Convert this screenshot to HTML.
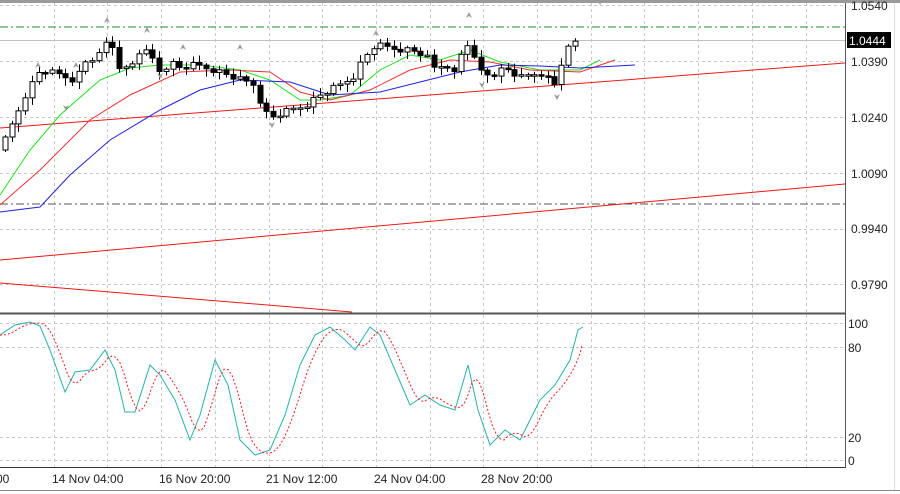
<!DOCTYPE html>
<html><head><meta charset="utf-8"><style>
body{margin:0;width:900px;height:494px;background:#fff;overflow:hidden;font-family:"Liberation Sans",sans-serif;}
svg{display:block}
text{font-family:"Liberation Sans",sans-serif;font-size:12px;fill:#222}
</style></head><body>
<svg id="s" width="900" height="494" xmlns="http://www.w3.org/2000/svg">
<rect x="0" y="0" width="900" height="494" fill="#fff"/>
<rect x="0" y="0" width="900" height="3" fill="#9a9a9a"/>
<g id="grid" stroke="#c8c8c8" stroke-dasharray="3,3" stroke-width="1"></g>
<line x1="0" y1="27" x2="845" y2="27" stroke="#2a8a2a" stroke-dasharray="8,3,2,3"/>
<line x1="0" y1="204" x2="845" y2="204" stroke="#555" stroke-dasharray="8,3,2,3"/>
<line x1="0" y1="40.5" x2="845" y2="40.5" stroke="#c0c0c0"/>
<line x1="0" y1="128" x2="845" y2="63" stroke="#f01818"/>
<line x1="0" y1="260" x2="845" y2="184" stroke="#f01818"/>
<line x1="0" y1="283" x2="352" y2="312" stroke="#f01818"/>
<g id="ma" fill="none" stroke-width="1"></g>
<g id="cdl"></g>
<g id="osc" fill="none"></g>
<line x1="845.5" y1="3" x2="845.5" y2="468" stroke="#555"/>
<line x1="0" y1="313.5" x2="845" y2="313.5" stroke="#555" stroke-width="2"/>
<line x1="0" y1="467.5" x2="845" y2="467.5" stroke="#333"/>
<line x1="0" y1="490.5" x2="900" y2="490.5" stroke="#888"/>
<line x1="894.5" y1="3" x2="894.5" y2="490" stroke="#ddd"/>
<text x="851" y="10">1.0540</text>
<text x="851" y="66">1.0390</text>
<text x="851" y="122">1.0240</text>
<text x="851" y="178">1.0090</text>
<text x="851" y="233">0.9940</text>
<text x="851" y="289">0.9790</text>
<rect x="847" y="32" width="44" height="16" fill="#000"/>
<text x="849" y="45" style="fill:#fff">1.0444</text>
<text x="848" y="328">100</text>
<text x="848" y="352">80</text>
<text x="848" y="442">20</text>
<text x="848" y="465">0</text>
<text x="-4" y="483">00</text>
<text x="52" y="483">14 Nov 04:00</text>
<text x="159" y="483">16 Nov 20:00</text>
<text x="266" y="483">21 Nov 12:00</text>
<text x="374" y="483">24 Nov 04:00</text>
<text x="481" y="483">28 Nov 20:00</text>
</svg>
<script>
(function(){
var NS="http://www.w3.org/2000/svg";
function el(p,t,a){var e=document.createElementNS(NS,t);for(var k in a)e.setAttribute(k,a[k]);document.getElementById(p).appendChild(e);return e;}
for(var i=1;i<16;i++){var x=Math.round(53.7*i)+.5;el('grid','line',{x1:x,y1:3,x2:x,y2:467});}
[5,61,117,173,229,284].forEach(function(y){el('grid','line',{x1:0,y1:y+.5,x2:845,y2:y+.5});});
[323,347,437,460].forEach(function(y){el('grid','line',{x1:0,y1:y+.5,x2:845,y2:y+.5});});
function interp(w,x){for(var i=0;i<w.length-1;i++){if(x>=w[i][0]&&x<=w[i+1][0]){var t=(x-w[i][0])/(w[i+1][0]-w[i][0]);return w[i][1]+t*(w[i+1][1]-w[i][1]);}}return w[w.length-1][1];}
function pl(g,w,c,d){var s=w.map(function(p){return p[0]+','+p[1]}).join(' ');var a={points:s,stroke:c};if(d)a['stroke-dasharray']=d;el(g,'polyline',a);}
pl('ma',[[0,195],[30,150],[60,115],[100,80],[130,68],[160,65],[200,65],[240,70],[270,80],[300,100],[320,100],[350,95],[380,70],[410,55],[440,60],[470,50],[500,62],[540,70],[580,70],[600,60]],'#1ee01e');
pl('ma',[[0,205],[40,170],[90,120],[130,95],[180,72],[230,70],[270,72],[300,92],[330,100],[370,90],[410,70],[450,60],[490,62],[530,70],[580,72],[615,60]],'#f03030');
pl('ma',[[0,212],[40,207],[70,175],[110,140],[160,110],[200,90],[240,80],[290,82],[330,95],[380,92],[420,82],[460,72],[500,65],[540,66],[580,68],[635,65]],'#2020e0');
var cw=[[0,150],[5,140],[25,95],[40,70],[60,75],[75,80],[85,62],[100,55],[107,40],[115,50],[120,70],[130,68],[140,50],[150,55],[160,72],[170,62],[180,68],[195,65],[215,70],[240,80],[255,85],[262,108],[270,118],[285,112],[305,105],[320,95],[340,85],[355,75],[362,60],[375,45],[390,48],[410,50],[425,55],[435,70],[445,62],[455,75],[465,38],[478,70],[490,75],[505,68],[520,78],[540,72],[555,85],[562,60],[570,45],[578,40]];
var prev=150;
for(var i=0;i<87;i++){var x=5+i*6.7;if(x>580)break;var c=interp(cw,x)+((i*37)%7-3);var o=prev;prev=c;
var hi=Math.min(o,c)-2-((i*13)%6);var lo=Math.max(o,c)+2+((i*17)%7);var xm=Math.round(x)+.5;
el('cdl','line',{x1:xm,y1:hi,x2:xm,y2:lo,stroke:'#000'});
var by=Math.min(o,c),h=Math.max(Math.abs(o-c),1.5);
el('cdl','rect',{x:xm-2.5,y:by,width:5,height:h,fill:(c<o)?'#fff':'#000',stroke:'#000'});}
[[107,17],[147,27],[183,44],[240,44],[376,30],[469,12],[38,62],[76,62]].forEach(function(p){el('cdl','path',{d:'M'+p[0]+' '+p[1]+' l-3 6 l3 -2 l3 2z',fill:'#999'});});
[[66,111],[160,79],[272,128],[482,88],[557,100],[600,5]].forEach(function(p){el('cdl','path',{d:'M'+p[0]+' '+p[1]+' l-3 -6 l3 2 l3 -2z',fill:'#999'});});
var ow=[[0,335],[15,325],[30,322],[40,326],[50,350],[65,392],[75,372],[90,370],[105,350],[115,370],[125,412],[135,412],[150,365],[160,375],[175,400],[190,440],[200,415],[215,360],[228,385],[240,440],[255,455],[270,450],[285,415],[300,365],[315,335],[330,327],[345,340],[355,350],[370,327],[380,335],[395,370],[410,405],[425,395],[440,405],[455,410],[468,365],[478,410],[490,445],[505,430],[520,440],[540,400],[555,385],[570,360],[578,330],[583,327]];
pl('osc',ow,'#2ab0a8');
var sw=[];for(var x=0;x<=582;x+=4){var v=(interp(ow,Math.max(0,x-4))+interp(ow,Math.max(0,x-9))+interp(ow,Math.max(0,x-14)))/3;sw.push([x,v.toFixed(1)]);}
sw.push([582,345]);
pl('osc',sw,'#f02020','2,2');
})();
</script>
</body></html>
